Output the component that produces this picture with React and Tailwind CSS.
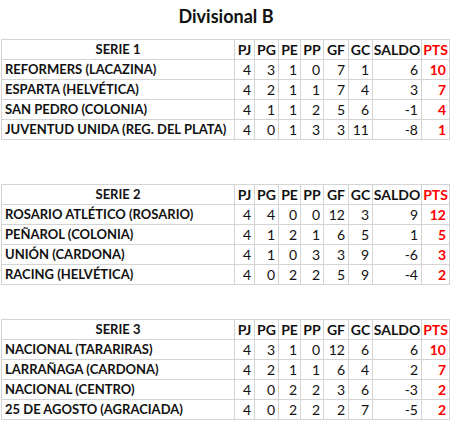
import React from "react";

const series = [
  {
    name: "SERIE 1",
    mt: "mt-[16px]",
    rows: [
      ["REFORMERS (LACAZINA)", 4, 3, 1, 0, 7, 1, 6, 10],
      ["ESPARTA (HELVÉTICA)", 4, 2, 1, 1, 7, 4, 3, 7],
      ["SAN PEDRO (COLONIA)", 4, 1, 1, 2, 5, 6, -1, 4],
      ["JUVENTUD UNIDA (REG. DEL PLATA)", 4, 0, 1, 3, 3, 11, -8, 1],
    ],
  },
  {
    name: "SERIE 2",
    mt: "mt-[44px]",
    rows: [
      ["ROSARIO ATLÉTICO (ROSARIO)", 4, 4, 0, 0, 12, 3, 9, 12],
      ["PEÑAROL (COLONIA)", 4, 1, 2, 1, 6, 5, 1, 5],
      ["UNIÓN (CARDONA)", 4, 1, 0, 3, 3, 9, -6, 3],
      ["RACING (HELVÉTICA)", 4, 0, 2, 2, 5, 9, -4, 2],
    ],
  },
  {
    name: "SERIE 3",
    mt: "mt-[34px]",
    rows: [
      ["NACIONAL (TARARIRAS)", 4, 3, 1, 0, 12, 6, 6, 10],
      ["LARRAÑAGA (CARDONA)", 4, 2, 1, 1, 6, 4, 2, 7],
      ["NACIONAL (CENTRO)", 4, 0, 2, 2, 3, 6, -3, 2],
      ["25 DE AGOSTO (AGRACIADA)", 4, 0, 2, 2, 2, 7, -5, 2],
    ],
  },
];

const heads = ["PJ", "PG", "PE", "PP", "GF", "GC", "SALDO"];
const widths = ["w-[233px]", "w-[20px]", "w-[24px]", "w-[22px]", "w-[23px]", "w-[25px]", "w-[24px]", "w-[49px]", "w-[28px]"];

const SerieTable = ({ serie }) => {
  return (
    <table className={`${serie.mt} ml-[1px] w-[449px] table-fixed border-collapse text-[14px] leading-none text-[#111]`}>
      <colgroup>
        {widths.map((w, i) => (
          <col key={i} className={w} />
        ))}
      </colgroup>
      <thead>
        <tr className="h-[20px]">
          <th className="border border-[#d4d4d4] text-center font-bold text-[13px]">{serie.name}</th>
          {heads.map((h) => (
            <th key={h} className="border border-[#d4d4d4] text-center font-bold px-0">{h}</th>
          ))}
          <th className="border border-[#d4d4d4] text-center font-bold text-[#ff0000]">PTS</th>
        </tr>
      </thead>
      <tbody>
        {serie.rows.map((r) => (
          <tr key={r[0]} className="h-[20px]">
            <td className="border border-[#d4d4d4] pl-[3px] font-bold text-[13px] whitespace-nowrap">{r[0]}</td>
            {r.slice(1, 8).map((v, i) => (
              <td key={i} className="border border-[#d4d4d4] text-right pr-[3px]">{v}</td>
            ))}
            <td className="border border-[#d4d4d4] text-right pr-[3px] font-bold text-[#ff0000]">{r[8]}</td>
          </tr>
        ))}
      </tbody>
    </table>
  );
};

const App = () => {
  return (
    <div className="w-[452px] h-[432px] bg-white font-['Lato',sans-serif] overflow-hidden">
      <h1 className="pt-[7px] h-[23px] text-center text-[18px] leading-none font-bold text-[#111]">Divisional B</h1>
      {series.map((s) => (
        <SerieTable key={s.name} serie={s} />
      ))}
    </div>
  );
};

export default App;
